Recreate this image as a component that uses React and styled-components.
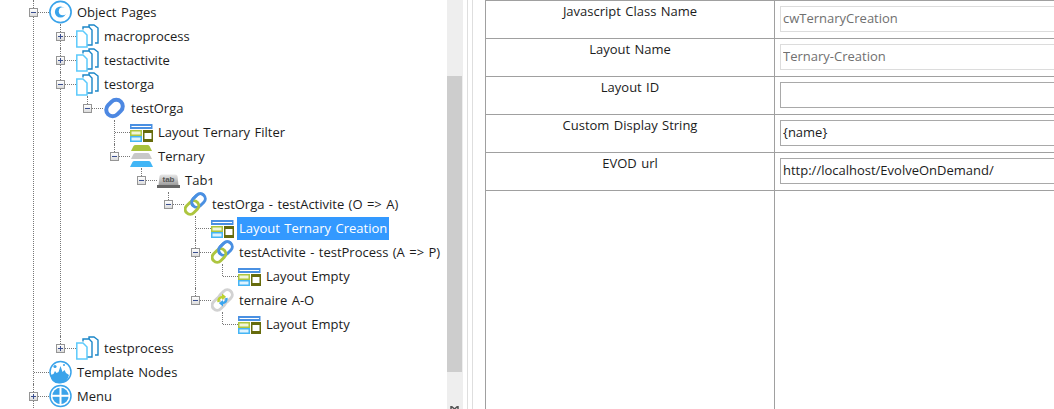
import { Fragment } from "react";
import styled, { createGlobalStyle } from "styled-components";

const GlobalStyle = createGlobalStyle`
  html, body {
    margin: 0;
    height: 100%;
    overflow: hidden;
    background: #fff;
    font-family: "Open Sans", "Noto Sans", sans-serif;
    font-size: 13px;
    word-spacing: 1px;
    color: #1c1c1c;
  }
`;

const Page = styled.div`
  display: flex;
  width: 1054px;
  height: 409px;
  overflow: hidden;
`;

const TreePane = styled.div`
  width: 447px;
  height: 409px;
  flex: none;
  overflow: hidden;
  padding-left: 33px;
  box-sizing: border-box;
`;

const List = styled.ul`
  list-style: none;
  margin: 0 0 0 ${(p) => (p.$root ? 0 : 27)}px;
  padding: 0;
`;

const Item = styled.li`
  position: relative;

  &::before {
    content: "";
    position: absolute;
    left: 0;
    top: 0;
    height: ${(p) => (p.$last ? "12px" : "100%")};
    border-left: 1px dotted #777;
  }
`;

const Row = styled.div`
  position: relative;
  display: flex;
  align-items: center;
  height: 24px;
  padding-left: 16px;
  white-space: nowrap;

  &::before {
    content: "";
    position: absolute;
    left: 1px;
    top: 12px;
    width: 15px;
    border-top: 1px dotted #777;
  }
`;

const Expander = styled.span`
  position: absolute;
  z-index: 1;
  left: -4px;
  top: 8px;
  width: 7px;
  height: 7px;
  border: 1px solid #959595;
  background: linear-gradient(#fff, #dcdcdc);
  display: flex;
  align-items: center;
  justify-content: center;

  &::before {
    content: "";
    width: 5px;
    height: 1px;
    background: #3a4f8f;
  }

  &::after {
    content: "";
    display: ${(p) => (p.$open ? "none" : "block")};
    position: absolute;
    left: 3px;
    top: 1px;
    width: 1px;
    height: 5px;
    background: #3a4f8f;
  }
`;

const IconSlot = styled.span`
  position: relative;
  z-index: 1;
  display: block;
  width: 23px;
  height: 24px;
  flex: none;
  background: #fff;

  svg {
    display: block;
  }
`;

const Label = styled.span`
  margin-left: ${(p) => (p.$selected ? 3 : 5)}px;
  padding: ${(p) => (p.$selected ? "0 2px" : 0)};
  line-height: 23px;
  font-feature-settings: "onum";
  background: ${(p) => (p.$selected ? "#3399ff" : "transparent")};
  color: ${(p) => (p.$selected ? "#fff" : "inherit")};
`;

const Scrollbar = styled.div`
  position: relative;
  width: 16px;
  height: 409px;
  flex: none;
  background: #eeeeee;
`;

const Thumb = styled.div`
  position: absolute;
  left: 0;
  top: 76px;
  width: 15px;
  height: 296px;
  background: #cdcdcd;
`;

const ScrollArrow = styled.svg`
  position: absolute;
  left: 3px;
  bottom: 0;
`;

const Splitter = styled.div`
  flex: none;
  width: 4px;
  margin: 0 12px 0 4px;
  border-left: 1px solid #dedede;
  border-right: 1px solid #dedede;
`;

const DetailPane = styled.div`
  flex: none;
  width: 600px;
  height: 409px;
  border-left: 1px solid #a0a0a0;
  display: grid;
  grid-template-columns: 288px 1fr;
  grid-template-rows: repeat(5, 38px) 1fr;
`;

const Caption = styled.div`
  border-top: 1px solid #a0a0a0;
  box-sizing: border-box;
  text-align: center;
  line-height: 20px;
`;

const Value = styled.div`
  border-top: 1px solid #a0a0a0;
  border-left: 1px solid #a0a0a0;
  box-sizing: border-box;
  padding: 5px 0 0 5px;
`;

const Input = styled.input`
  display: block;
  width: 500px;
  height: 26px;
  box-sizing: border-box;
  padding: 0 2px 2px;
  margin: 0;
  font: inherit;
  word-spacing: inherit;
  color: #1c1c1c;
  background: #fff;
  border: 1px solid #a9a9a9;
  outline: none;

  &:disabled {
    color: #707070;
    border-color: #dcdcdc;
  }
`;

const Blank = styled.div`
  border-top: 1px solid #a0a0a0;
  border-left: ${(p) => (p.$value ? "1px solid #a0a0a0" : "none")};
`;

const CircleIcon = () => (
  <svg width="23" height="24" viewBox="0 0 23 24">
    <circle cx="11.5" cy="12" r="10.6" fill="#fff" stroke="#3aa3ea" strokeWidth="1.7" />
    <circle cx="11.5" cy="12" r="5.6" fill="#3aa3ea" />
    <circle cx="13.8" cy="11.2" r="4" fill="#fff" />
  </svg>
);

const PagesIcon = () => (
  <svg width="23" height="24" viewBox="0 0 23 24">
    <path d="M13 3.5V1h5l4 3v15h-3" fill="#fff" stroke="#1b86c8" strokeWidth="1.4" />
    <path d="M7 5.5V3h6l3 3v15H11" fill="#fff" stroke="#1b86c8" strokeWidth="1.4" />
    <path d="M.8 7H7l4 4v12H.8z" fill="#fff" stroke="#5ccafc" strokeWidth="1.5" />
  </svg>
);

const RingIcon = () => (
  <svg width="23" height="24" viewBox="0 0 23 24">
    <rect x="2.5" y="5.5" width="18" height="13" rx="6.5" transform="rotate(-45 11.5 12)" fill="none" stroke="#4d88e2" strokeWidth="4" />
  </svg>
);

const LayoutIcon = () => (
  <svg width="23" height="24" viewBox="0 0 23 24">
    <rect x="0" y="4" width="22.5" height="5" fill="#4a90e2" />
    <rect x="1.5" y="6" width="19.5" height="1" fill="#fff" />
    <rect x="0.75" y="10.75" width="10.5" height="4.5" fill="#f2f6d8" stroke="#adc53f" strokeWidth="1.5" />
    <rect x="0.75" y="16.75" width="10.5" height="4.5" fill="#dff3fe" stroke="#45b5f5" strokeWidth="1.5" />
    <rect x="13" y="10" width="10" height="12" fill="#666b0c" />
    <rect x="14.5" y="13" width="7" height="6" fill="#fff" />
  </svg>
);

const TernaryIcon = () => (
  <svg width="23" height="24" viewBox="0 0 23 24">
    <path d="M1 7L3.5 2q.5-1 2-1h12q1.5 0 2 1L22 7z" fill="#a9c33c" />
    <path d="M1 15L3.5 10q.5-1 2-1h12q1.5 0 2 1L22 15z" fill="#c8c8c8" />
    <path d="M0 23L2.5 18q.5-1 2-1h14q1.5 0 2 1L23 23z" fill="#42b6f6" />
  </svg>
);

const TabGlyph = styled.text`
  font-family: "Liberation Sans", sans-serif;
  font-size: 8px;
  font-weight: 700;
  fill: #555;
`;

const TabIcon = () => (
  <svg width="23" height="24" viewBox="0 0 23 24">
    <defs>
      <linearGradient id="tabFill" x1="0" y1="0" x2="0" y2="1">
        <stop offset="0" stopColor="#e8e8e8" />
        <stop offset="1" stopColor="#9e9e9e" />
      </linearGradient>
    </defs>
    <path d="M1.5 17l1-9q.4-1.5 2-1.5h14q1.6 0 2 1.5l1 9z" fill="url(#tabFill)" />
    <rect x="0" y="17" width="23" height="3" fill="#666" />
    <TabGlyph x="11.5" y="14" textAnchor="middle">tab</TabGlyph>
  </svg>
);

// two capsules turned 45deg; the upper one is redrawn clipped so they interlock
const Capsule = ({ cx, cy, color }) => (
  <rect
    x={cx - 7.5}
    y={cy - 5}
    width="15"
    height="10"
    rx="5"
    transform={`rotate(-45 ${cx} ${cy})`}
    fill="none"
    stroke={color}
    strokeWidth="3"
  />
);

const LinkIcon = () => (
  <svg width="23" height="24" viewBox="0 0 23 24">
    <defs>
      <clipPath id="linkUpper">
        <path d="M0 0H23L0 24z" />
      </clipPath>
    </defs>
    <Capsule cx={14.5} cy={8.5} color="#4a90e2" />
    <Capsule cx={8} cy={15.5} color="#adc53f" />
    <g clipPath="url(#linkUpper)">
      <Capsule cx={14.5} cy={8.5} color="#4a90e2" />
    </g>
  </svg>
);

const LoopIcon = () => (
  <svg width="23" height="24" viewBox="0 0 23 24">
    <Capsule cx={14.5} cy={8.5} color="#d2d2d2" />
    <Capsule cx={8} cy={15.5} color="#d2d2d2" />
    <path d="M7.5 14q-.5-4.5 4-5" fill="none" stroke="#bcd32e" strokeWidth="2.4" />
    <path d="M11 5.5l4 3.3-4 3.2z" fill="#bcd32e" />
    <path d="M15.5 10q.5 4.5-4 5" fill="none" stroke="#3ba5ee" strokeWidth="2.4" />
    <path d="M12 12l-4 3.200 4 3.300z" fill="#3ba5ee" />
  </svg>
);

const TemplateIcon = () => (
  <svg width="23" height="24" viewBox="0 0 23 24">
    <circle cx="11.5" cy="12" r="10.5" fill="#fff" stroke="#3aa3ea" strokeWidth="1.5" />
    <path d="M1.5 15l3-1 1.5-3 1.5 2 2-1 2-6 2 6 2-2 1.5 3 3 2q-2 8.5-10 8.5T1.5 15z" fill="#3aa3ea" />
    <circle cx="6" cy="6.5" r="1.6" fill="#3aa3ea" />
    <circle cx="15" cy="5" r="1" fill="#3aa3ea" />
  </svg>
);

const MenuIcon = () => (
  <svg width="23" height="24" viewBox="0 0 23 24">
    <circle cx="11.5" cy="12" r="10.5" fill="#fff" stroke="#3aa3ea" strokeWidth="1.5" />
    <circle cx="11.5" cy="12" r="8.2" fill="#3aa3ea" />
    <rect x="2" y="10.8" width="19" height="2" fill="#fff" />
    <rect x="10.5" y="3" width="2" height="18" fill="#fff" />
  </svg>
);

const icons = {
  circle: CircleIcon,
  pages: PagesIcon,
  ring: RingIcon,
  layout: LayoutIcon,
  ternary: TernaryIcon,
  tab: TabIcon,
  link: LinkIcon,
  loop: LoopIcon,
  template: TemplateIcon,
  menu: MenuIcon,
};

const tree = [
  {
    icon: "circle",
    text: "Object Pages",
    open: true,
    children: [
      { icon: "pages", text: "macroprocess", closed: true },
      { icon: "pages", text: "testactivite", closed: true },
      {
        icon: "pages",
        text: "testorga",
        open: true,
        children: [
          {
            icon: "ring",
            text: "testOrga",
            open: true,
            last: true,
            children: [
              { icon: "layout", text: "Layout Ternary Filter" },
              {
                icon: "ternary",
                text: "Ternary",
                open: true,
                last: true,
                children: [
                  {
                    icon: "tab",
                    text: "Tab1",
                    open: true,
                    last: true,
                    children: [
                      {
                        icon: "link",
                        text: "testOrga - testActivite (O => A)",
                        open: true,
                        last: true,
                        children: [
                          { icon: "layout", text: "Layout Ternary Creation", selected: true },
                          {
                            icon: "link",
                            text: "testActivite - testProcess (A => P)",
                            open: true,
                            children: [{ icon: "layout", text: "Layout Empty", last: true }],
                          },
                          {
                            icon: "loop",
                            text: "ternaire A-O",
                            open: true,
                            last: true,
                            children: [{ icon: "layout", text: "Layout Empty", last: true }],
                          },
                        ],
                      },
                    ],
                  },
                ],
              },
            ],
          },
        ],
      },
      { icon: "pages", text: "testprocess", closed: true, last: true },
    ],
  },
  { icon: "template", text: "Template Nodes" },
  { icon: "menu", text: "Menu", closed: true },
];

const fields = [
  { name: "Javascript Class Name", value: "cwTernaryCreation", disabled: true },
  { name: "Layout Name", value: "Ternary-Creation", disabled: true },
  { name: "Layout ID", value: "" },
  { name: "Custom Display String", value: "{name}" },
  { name: "EVOD url", value: "http://localhost/EvolveOnDemand/" },
];

function TreeNode({ node }) {
  const Icon = icons[node.icon];
  return (
    <Item $last={node.last}>
      <Row>
        {(node.open || node.closed) && <Expander $open={node.open} />}
        <IconSlot>
          <Icon />
        </IconSlot>
        <Label $selected={node.selected}>{node.text}</Label>
      </Row>
      {node.children && (
        <List>
          {node.children.map((child, i) => (
            <TreeNode key={i} node={child} />
          ))}
        </List>
      )}
    </Item>
  );
}

export default function App() {
  return (
    <Page>
      <GlobalStyle />
      <TreePane>
        <List $root>
          {tree.map((node, i) => (
            <TreeNode key={i} node={node} />
          ))}
        </List>
      </TreePane>
      <Scrollbar>
        <Thumb />
        <ScrollArrow width="9" height="3" viewBox="0 0 9 3">
          <path d="M1 0v3M8 0v3M1 0l3.5 3L8 0" fill="none" stroke="#555" strokeWidth="1.5" />
        </ScrollArrow>
      </Scrollbar>
      <Splitter />
      <DetailPane>
        {fields.map((f) => (
          <Fragment key={f.name}>
            <Caption>{f.name}</Caption>
            <Value>
              <Input readOnly disabled={f.disabled} value={f.value} />
            </Value>
          </Fragment>
        ))}
        <Blank />
        <Blank $value />
      </DetailPane>
    </Page>
  );
}
